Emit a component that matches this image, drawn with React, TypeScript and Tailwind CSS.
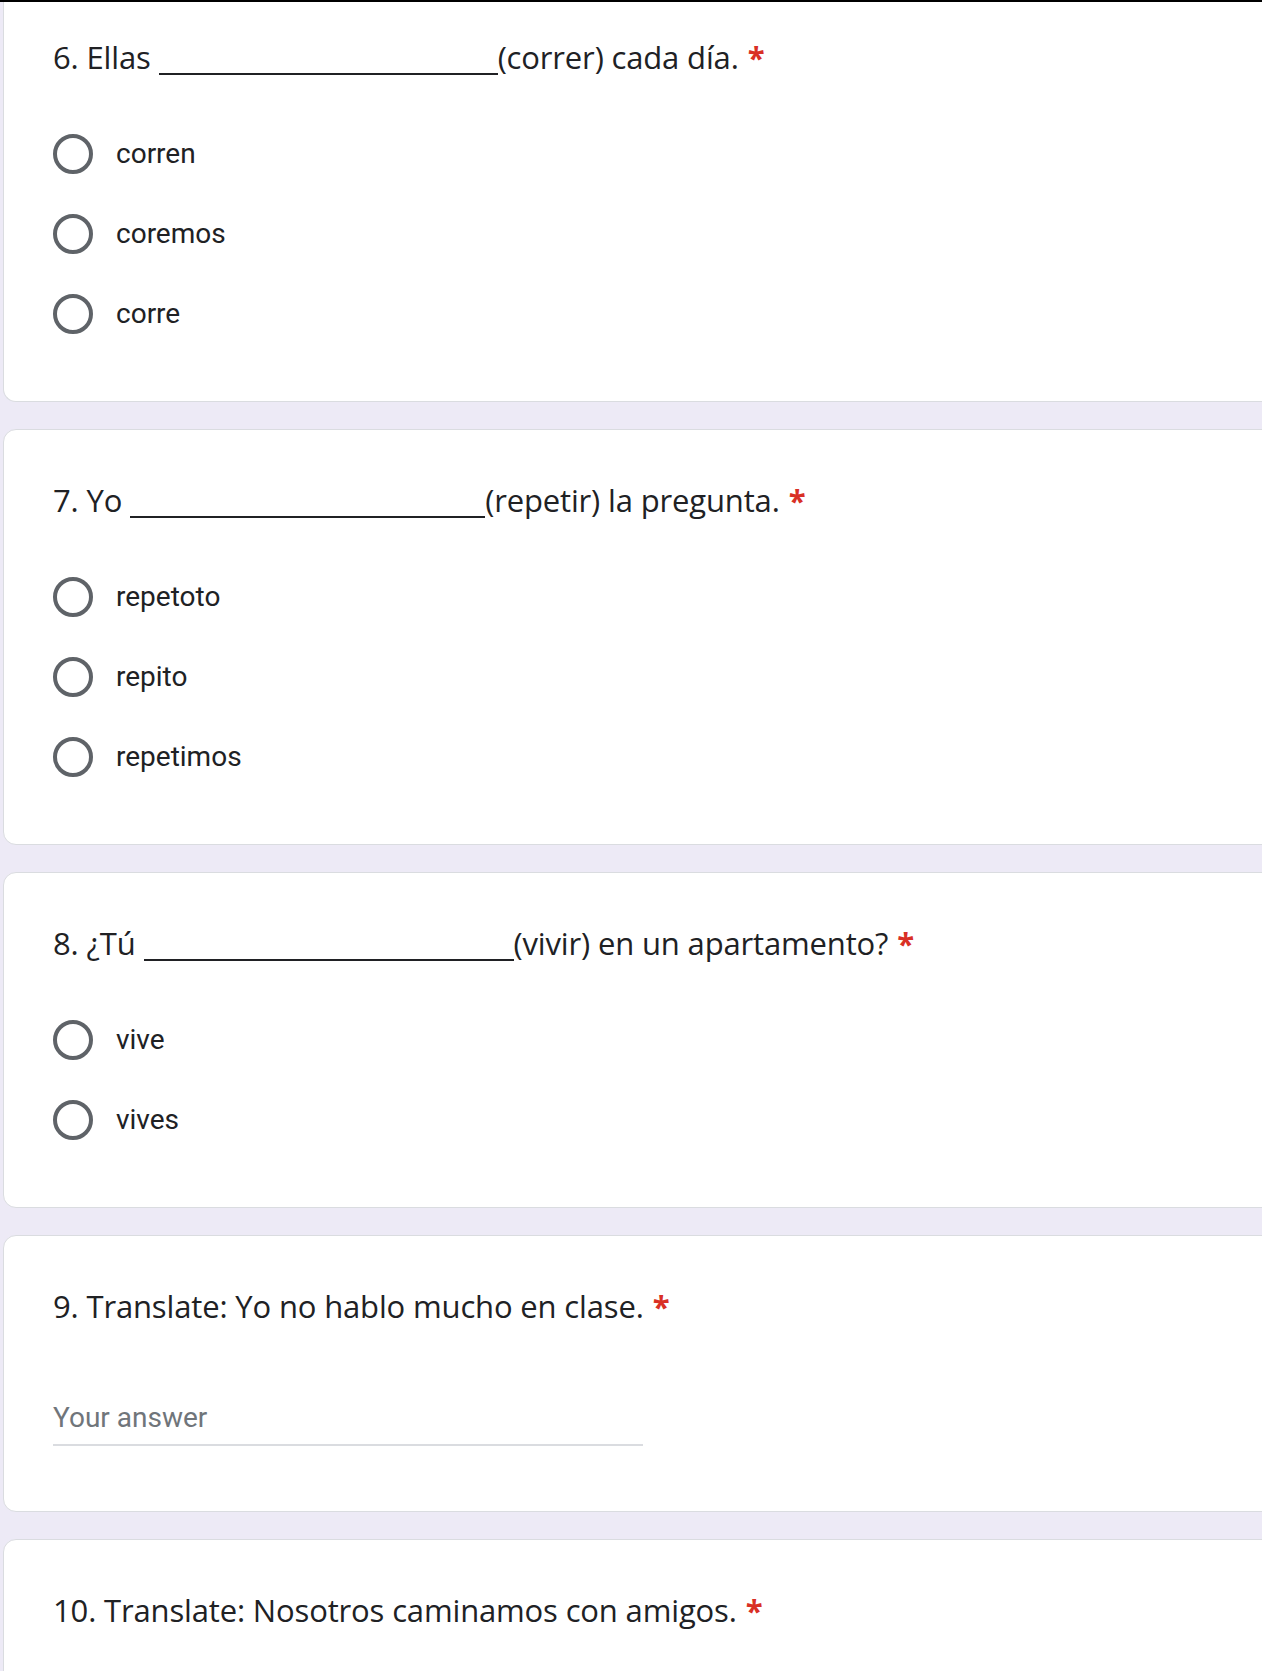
import React from "react";

type Choice = { label: string };

type Question = {
  num: string;
  before: string;
  blank?: number;
  after: string;
  options?: Choice[];
  text?: boolean;
};

const questions: Question[] = [
  { num: "6.", before: "Ellas", blank: 339, after: "(correr) cada día.", options: [{ label: "corren" }, { label: "coremos" }, { label: "corre" }] },
  { num: "7.", before: "Yo", blank: 355, after: "(repetir) la pregunta.", options: [{ label: "repetoto" }, { label: "repito" }, { label: "repetimos" }] },
  { num: "8.", before: "¿Tú", blank: 370, after: "(vivir) en un apartamento?", options: [{ label: "vive" }, { label: "vives" }] },
  { num: "9.", before: "Translate: Yo no hablo mucho en clase.", after: "", text: true },
  { num: "10.", before: "Translate: Nosotros caminamos con amigos.", after: "" },
];

function Title({ q }: { q: Question }) {
  return (
    <div className="h-[40px] whitespace-nowrap font-['Open_Sans','Noto_Sans',sans-serif] text-[31px] leading-[40px] tracking-[-0.15px] text-[#202124]">
      {q.num} {q.before}
      {q.blank && (
        <span
          className="ml-[8px] inline-block h-[6px] border-b-2 border-[#202124] align-[-6px]"
          style={{ width: q.blank }}
        />
      )}
      {q.after}
      <span className="ml-[9px] font-bold text-[#d93025]">*</span>
    </div>
  );
}

function Radio({ label }: Choice) {
  return (
    <div className="flex h-[80px] items-center">
      <div className="h-[40px] w-[40px] shrink-0 rounded-full border-[4px] border-[#5f6368]" />
      <span className="ml-[23px] font-['Roboto',sans-serif] text-[28px] text-[#202124]">{label}</span>
    </div>
  );
}

function Card({ q, first }: { q: Question; first?: boolean }) {
  return (
    <div
      className={
        first
          ? "mr-[-24px] rounded-bl-[13px] border-b border-l border-[#dadce0] bg-white pl-[49px] pt-[35px] pb-[47px]"
          : "mr-[-24px] mt-[27px] rounded-[13px] border border-[#dadce0] bg-white pl-[49px] pt-[50px] pb-[47px]"
      }
    >
      <Title q={q} />
      {q.options && (
        <div className="mt-[37px] flex flex-col">
          {q.options.map((o) => (
            <Radio key={o.label} label={o.label} />
          ))}
        </div>
      )}
      {q.text && (
        <div className="mt-[72px] mb-[18px] w-[590px] border-b-2 border-[#dadce0] pb-[6px] font-['Roboto',sans-serif] text-[28px] leading-[40px] text-[#70757a]">
          Your answer
        </div>
      )}
      {!q.options && !q.text && <div className="h-[120px]" />}
    </div>
  );
}

export default function App() {
  return (
    <div className="h-[1671px] w-full overflow-hidden border-t-2 border-black bg-[#edeaf6] pl-[3px]">
      {questions.map((q, i) => (
        <Card key={q.num} q={q} first={i === 0} />
      ))}
    </div>
  );
}
